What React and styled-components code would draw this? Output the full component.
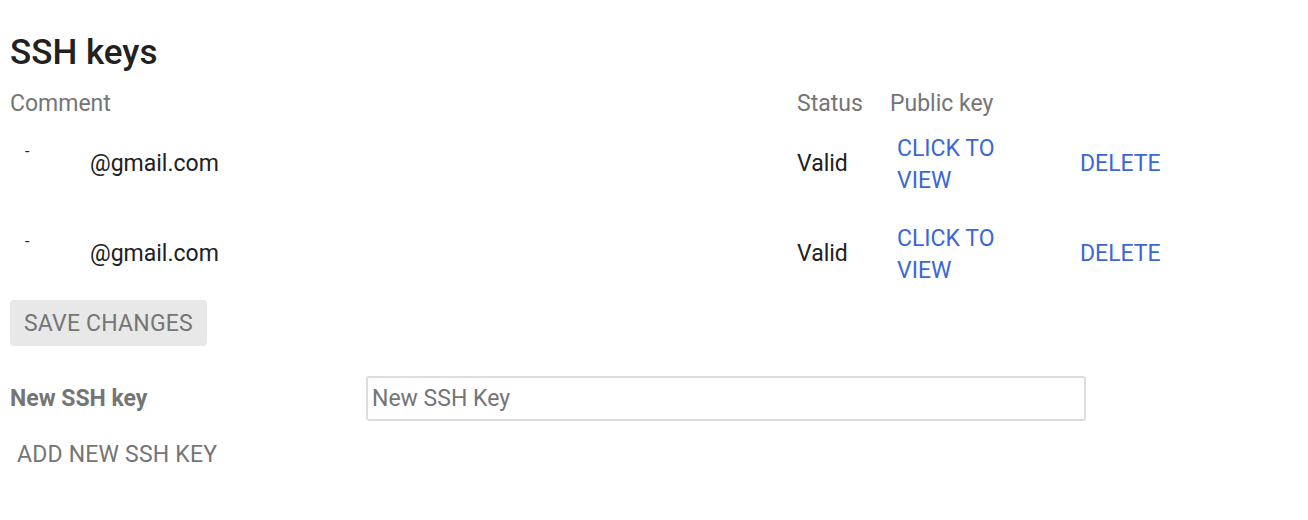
import React from 'react'
import styled, { createGlobalStyle } from 'styled-components'

const GlobalStyle = createGlobalStyle`
  body {
    margin: 0;
    background: #fff;
    font-family: Roboto, "Noto Sans", sans-serif;
    color: #212121;
  }
`

const keys = [
  { id: 1, comment: '@gmail.com', status: 'Valid' },
  { id: 2, comment: '@gmail.com', status: 'Valid' },
]

function App() {
  return (
    <Page>
      <GlobalStyle />
      <Title>SSH keys</Title>
      <KeyTable>
        <HeadCell>Comment</HeadCell>
        <HeadCell>Status</HeadCell>
        <HeadCell>Public key</HeadCell>
        <HeadCell />
        {keys.map(key => (
          <React.Fragment key={key.id}>
            <Cell>
              <Comment>
                <Mark>-</Mark>
                <span>{key.comment}</span>
              </Comment>
            </Cell>
            <Cell>{key.status}</Cell>
            <Cell>
              <LinkButton $wrap>Click to view</LinkButton>
            </Cell>
            <Cell>
              <LinkButton>Delete</LinkButton>
            </Cell>
          </React.Fragment>
        ))}
      </KeyTable>
      <SaveButton>Save changes</SaveButton>
      <NewKeyRow>
        <Label>New SSH key</Label>
        <KeyInput placeholder='New SSH Key' />
      </NewKeyRow>
      <TextButton>Add new SSH key</TextButton>
    </Page>
  )
}

export default App

const Page = styled.div`
  padding: 33px 10px 40px;
`

const Title = styled.h1`
  margin: 0 0 15px;
  font-size: 35px;
  font-weight: 500;
  line-height: 40px;
  color: #212121;
`

const KeyTable = styled.div`
  display: grid;
  grid-template-columns: 787px 93px 190px 110px;
  grid-auto-rows: 90px;
  grid-template-rows: 30px;
  font-size: 23px;
`

const HeadCell = styled.div`
  display: flex;
  align-items: center;
  color: #757575;
`

const Cell = styled.div`
  display: flex;
  align-items: center;
  &:nth-child(4n + 3) {
    padding-left: 7px;
  }
`

const Comment = styled.div`
  display: flex;
  padding-left: 15px;
  color: #212121;
`

const Mark = styled.span`
  width: 65px;
  position: relative;
  top: -8px;
  font-size: 16px;
`

const LinkButton = styled.span`
  display: inline-block;
  width: ${props => props.$wrap ? '115px' : 'auto'};
  margin-top: ${props => props.$wrap ? '3px' : '1px'};
  line-height: 32px;
  color: #3b67d6;
  text-transform: uppercase;
  cursor: pointer;
`

const SaveButton = styled.button`
  display: block;
  margin-top: 2px;
  height: 46px;
  padding: 0 14px;
  border: none;
  border-radius: 4px;
  background: #e8e8e8;
  color: #757575;
  font-family: inherit;
  font-size: 23px;
  letter-spacing: 0.2px;
  text-transform: uppercase;
`

const NewKeyRow = styled.div`
  display: grid;
  grid-template-columns: 356px 720px;
  align-items: center;
  margin-top: 30px;
`

const Label = styled.label`
  font-size: 23px;
  font-weight: 700;
  color: #757575;
`

const KeyInput = styled.input`
  box-sizing: border-box;
  height: 45px;
  padding: 0 4px;
  border: 2px solid #dddddd;
  border-radius: 3px;
  font-family: inherit;
  font-size: 23px;
  color: #212121;
  outline: none;
  &::placeholder {
    color: #757575;
  }
`

const TextButton = styled.div`
  margin-top: 18px;
  padding-left: 7px;
  line-height: 32px;
  font-size: 23px;
  letter-spacing: 0.2px;
  color: #757575;
  text-transform: uppercase;
  cursor: pointer;
`
